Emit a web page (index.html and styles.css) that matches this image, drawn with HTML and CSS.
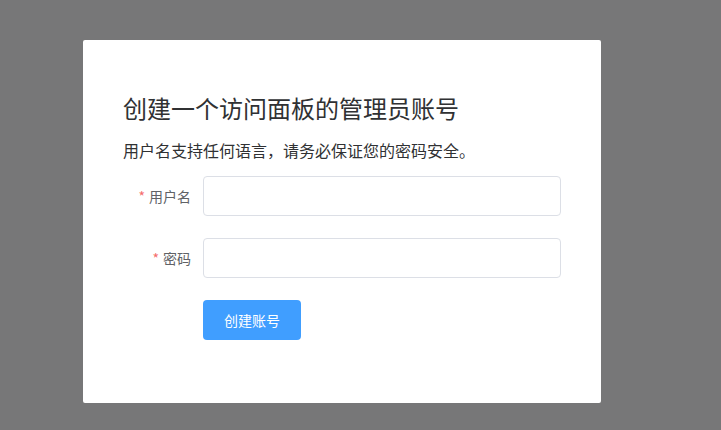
FILE: index.html
```html
<!DOCTYPE html>
<html>
<head>
<meta charset="utf-8">
<title>创建管理员账号</title>
<link rel="stylesheet" href="styles.css">
</head>
<body>
<div class="dialog">
  <h1 class="title">创建一个访问面板的管理员账号</h1>
  <p class="hint">用户名支持任何语言，请务必保证您的密码安全。</p>
  <form class="form">
    <div class="form-item">
      <label class="label"><span class="req">*</span>用户名</label>
      <input class="input" type="text">
    </div>
    <div class="form-item">
      <label class="label"><span class="req">*</span>密码</label>
      <input class="input" type="password">
    </div>
    <div class="form-item">
      <span class="label"></span>
      <button class="button" type="button">创建账号</button>
    </div>
  </form>
</div>
</body>
</html>
```

FILE: styles.css
```css
html, body {
   margin: 0;
   height: 100%;
}

body {
   background-color: #777778;
   font-family: "Noto Sans CJK SC", "Liberation Sans", sans-serif;
   padding: 40px 0 0 83px;
   box-sizing: border-box;
}

.dialog {
   width: 518px;
   height: 363px;
   box-sizing: border-box;
   background-color: #fff;
   border-radius: 2px;
   padding: 50px 40px 0 40px;
}

.title {
   margin: 0;
   font-size: 24px;
   font-weight: normal;
   line-height: 36px;
   color: #303133;
}

.hint {
   margin: 12px 0 0 0;
   font-size: 16px;
   line-height: 24px;
   color: #303133;
}

.form {
   margin-top: 14px;
}

.form-item {
   display: flex;
   align-items: center;
   margin-bottom: 22px;
}

.label {
   width: 80px;
   flex: none;
   box-sizing: border-box;
   padding-right: 12px;
   text-align: right;
   font-size: 14px;
   color: #606266;
}

.req {
   color: #f56c6c;
   margin-right: 4px;
}

.input {
   width: 358px;
   height: 40px;
   box-sizing: border-box;
   border: 1px solid #dcdfe6;
   border-radius: 4px;
   padding: 0 15px;
   font-size: 14px;
   outline: none;
}

.button {
   width: 98px;
   height: 40px;
   border: none;
   border-radius: 4px;
   background-color: #409eff;
   color: #fff;
   font-family: inherit;
   font-size: 14px;
}
```
